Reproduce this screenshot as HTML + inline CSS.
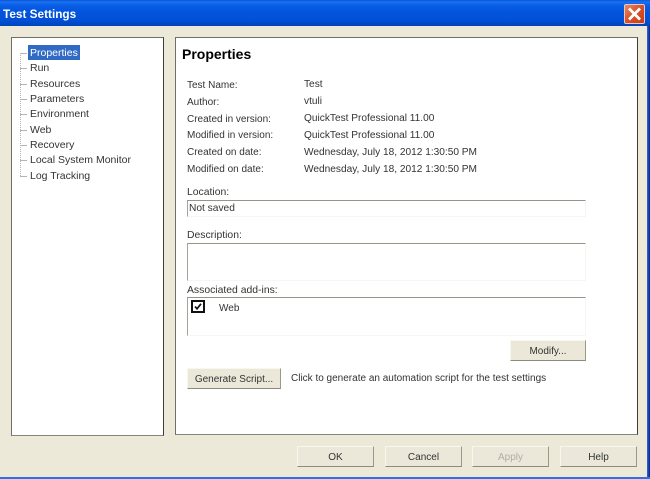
<!DOCTYPE html>
<html>
<head>
<meta charset="utf-8">
<style>
html,body{margin:0;padding:0;width:650px;height:479px;overflow:hidden;background:#ece9d8;}
body{position:relative;font-family:"Liberation Sans",sans-serif;font-size:10.5px;color:#333;}
div{position:absolute;box-sizing:border-box;}
.t{white-space:nowrap;line-height:13px;height:13px;}
.v{font-size:10.15px;}
.l{font-size:10px;}
.titlebar{left:0;top:0;width:650px;height:26px;background:linear-gradient(to bottom,#0a56d8 0,#1a72f0 2px,#0a5fe6 5px,#0254dc 12px,#0250d8 20px,#0248c4 24px,#0246bd 26px);}
.panel{background:#fff;border:1px solid;border-color:#716f64 #3c3c38 #86847a #716f64;}
.btn{background:#ebe8d9;border:1px solid;border-color:#f8f7ef #9a9888 #8d8b7e #f8f7ef;text-align:center;line-height:21px;color:#333;font-size:10px;}
.field{background:#fff;border-top:1px solid #97958a;border-left:1px solid #a5a398;border-right:1px solid #f7f6f0;border-bottom:1px solid #f7f6f0;}
.h{background:#b4b4ac;height:1px;width:7px;left:20px;}
</style>
</head>
<body>
<div class="titlebar"></div>
<div class="t" style="left:3px;top:7px;color:#fff;font-weight:bold;font-size:11.8px;height:14px;line-height:14px;">Test Settings</div>
<div style="left:624px;top:4px;width:21px;height:20px;border-radius:2px;background:linear-gradient(135deg,#e88a66,#d8502a 50%,#c83c18);border:1px solid #e8c8c0;"></div>
<svg style="position:absolute;left:624px;top:4px" width="21" height="20"><path d="M5 4.5 L16 15.5 M16 4.5 L5 15.5" stroke="#fff" stroke-width="2.8" fill="none"/></svg>
<div style="left:647px;top:26px;width:3px;height:453px;background:linear-gradient(to right,#2b6be8,#0d3fb0 60%,#1a1a70);"></div>
<div style="left:0;top:477px;width:650px;height:2px;background:#2f6fe8;"></div>

<div class="panel" style="left:11px;top:37px;width:153px;height:399px;"></div>
<div class="panel" style="left:175px;top:37px;width:463px;height:398px;"></div>

<div style="left:20px;top:53px;width:1px;height:123px;border-left:1px dotted #b4b4ac;"></div>
<div class="h" style="top:53px;"></div>
<div class="h" style="top:68px;"></div>
<div class="h" style="top:84px;"></div>
<div class="h" style="top:99px;"></div>
<div class="h" style="top:114px;"></div>
<div class="h" style="top:130px;"></div>
<div class="h" style="top:145px;"></div>
<div class="h" style="top:160px;"></div>
<div class="h" style="top:176px;"></div>
<div style="left:28px;top:45px;width:52px;height:15px;background:#316ac5;"></div>
<div class="t" style="left:30px;top:47px;color:#fff;">Properties</div>
<div class="t" style="left:30px;top:62px;">Run</div>
<div class="t" style="left:30px;top:78px;">Resources</div>
<div class="t" style="left:30px;top:93px;">Parameters</div>
<div class="t" style="left:30px;top:108px;">Environment</div>
<div class="t" style="left:30px;top:124px;">Web</div>
<div class="t" style="left:30px;top:139px;">Recovery</div>
<div class="t" style="left:30px;top:154px;">Local System Monitor</div>
<div class="t" style="left:30px;top:170px;">Log Tracking</div>

<div class="t" style="left:182px;top:46px;font-weight:bold;font-size:14px;color:#000;height:16px;line-height:16px;">Properties</div>

<div class="t l" style="left:187px;top:79px;">Test Name:</div>
<div class="t l" style="left:187px;top:96px;">Author:</div>
<div class="t l" style="left:187px;top:113px;">Created in version:</div>
<div class="t l" style="left:187px;top:129px;">Modified in version:</div>
<div class="t l" style="left:187px;top:146px;">Created on date:</div>
<div class="t l" style="left:187px;top:163px;">Modified on date:</div>

<div class="t v" style="left:304px;top:78px;">Test</div>
<div class="t v" style="left:304px;top:95px;">vtuli</div>
<div class="t v" style="left:304px;top:112px;">QuickTest Professional 11.00</div>
<div class="t v" style="left:304px;top:129px;">QuickTest Professional 11.00</div>
<div class="t v" style="left:304px;top:146px;">Wednesday, July 18, 2012 1:30:50 PM</div>
<div class="t v" style="left:304px;top:163px;">Wednesday, July 18, 2012 1:30:50 PM</div>

<div class="t" style="left:187px;top:186px;font-size:10.4px;">Location:</div>
<div class="field" style="left:187px;top:200px;width:399px;height:17px;"></div>
<div class="t" style="left:189px;top:202px;font-size:10.2px;">Not saved</div>

<div class="t" style="left:187px;top:229px;font-size:10.4px;">Description:</div>
<div class="field" style="left:187px;top:243px;width:399px;height:38px;"></div>

<div class="t" style="left:187px;top:284px;font-size:10.4px;">Associated add-ins:</div>
<div class="field" style="left:187px;top:297px;width:399px;height:39px;"></div>
<div style="left:191px;top:300px;width:14px;height:13px;border:2px solid #111;background:#fff;"></div>
<svg style="position:absolute;left:191px;top:300px" width="14" height="13"><path d="M4 6.5 L6 8.8 L10 3.8" stroke="#111" stroke-width="1.7" fill="none"/></svg>
<div class="t l" style="left:219px;top:302px;">Web</div>

<div class="btn" style="left:510px;top:340px;width:76px;height:21px;">Modify...</div>
<div class="btn" style="left:187px;top:368px;width:94px;height:21px;">Generate Script...</div>
<div class="t l" style="left:291px;top:372px;">Click to generate an automation script for the test settings</div>

<div class="btn" style="left:297px;top:446px;width:77px;height:21px;">OK</div>
<div class="btn" style="left:385px;top:446px;width:77px;height:21px;">Cancel</div>
<div class="btn" style="left:472px;top:446px;width:77px;height:21px;color:#b0aea2;">Apply</div>
<div class="btn" style="left:560px;top:446px;width:77px;height:21px;">Help</div>
</body>
</html>
